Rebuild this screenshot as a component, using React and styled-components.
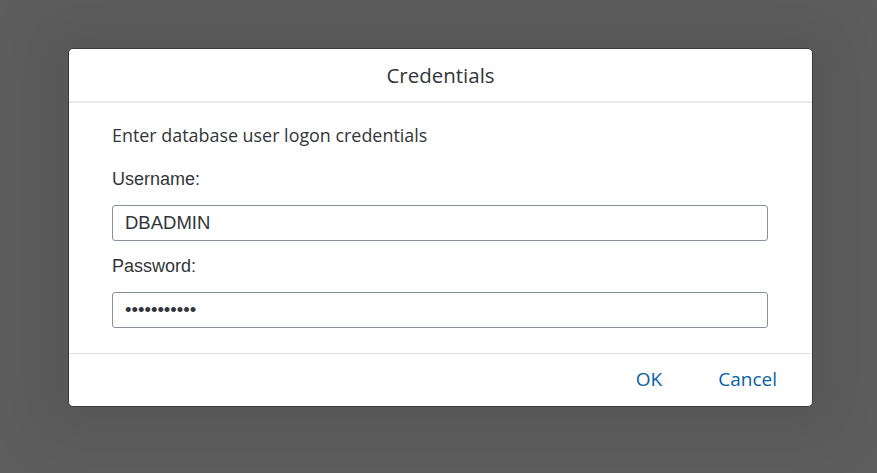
import styled, { createGlobalStyle } from "styled-components";

const GlobalStyle = createGlobalStyle`
	html, body {
		margin: 0;
		padding: 0;
		background: #5e5e5e;
	}
	* {
		box-sizing: border-box;
	}
`;

const Backdrop = styled.div`
	width: 877px;
	height: 473px;
	display: flex;
	align-items: flex-start;
	padding: 48px 0 0 68px;
	background: #5e5e5e;
`;

const Dialog = styled.div`
	width: 745px;
	background: #fff;
	border-radius: 5px;
	border: 1px solid #3a3a3a;
	box-shadow: 0 0 60px 30px rgba(0, 0, 0, 0.08);
	display: flex;
	flex-direction: column;
	overflow: hidden;
`;

const Header = styled.div`
	height: 54px;
	border-bottom: 2px solid #e8e8e8;
	display: flex;
	align-items: center;
	justify-content: center;
	font-family: "Open Sans", "Noto Sans", sans-serif;
	font-size: 20.5px;
	color: #32363a;
`;

const Content = styled.div`
	padding: 20px 44px 25px 43px;
	display: flex;
	flex-direction: column;
`;

const Intro = styled.p`
	margin: 0 0 22px;
	font-family: "Open Sans", "Noto Sans", sans-serif;
	font-size: 17.9px;
	color: #32363a;
`;

const Label = styled.label`
	font-family: "Liberation Sans", Arial, sans-serif;
	font-size: 18px;
	color: #32363a;
	margin-bottom: 15px;
`;

const Input = styled.input`
	height: 36px;
	width: 100%;
	border: 1px solid #89919a;
	border-radius: 3px;
	padding: 0 12px;
	font-family: "Liberation Sans", Arial, sans-serif;
	font-size: 18.5px;
	color: #32363a;
	margin-bottom: ${(p) => (p.$last ? "0" : "15px")};
	outline: none;
`;

const Footer = styled.div`
	height: 53px;
	border-top: 1px solid #e0e0e0;
	display: flex;
	align-items: center;
	justify-content: flex-end;
	padding: 0 35px 3px 0;
	gap: 56px;
`;

const Button = styled.button`
	border: none;
	background: none;
	padding: 0;
	font-family: "Open Sans", "Noto Sans", sans-serif;
	font-size: 19px;
	color: #0a5fa8;
	cursor: pointer;
`;

const App = () => (
	<>
		<GlobalStyle />
		<Backdrop>
			<Dialog>
				<Header>Credentials</Header>
				<Content>
					<Intro>Enter database user logon credentials</Intro>
					<Label>Username:</Label>
					<Input defaultValue="DBADMIN" />
					<Label>Password:</Label>
					<Input type="password" defaultValue="12345678901" $last />
				</Content>
				<Footer>
					<Button>OK</Button>
					<Button>Cancel</Button>
				</Footer>
			</Dialog>
		</Backdrop>
	</>
);

export default App;
